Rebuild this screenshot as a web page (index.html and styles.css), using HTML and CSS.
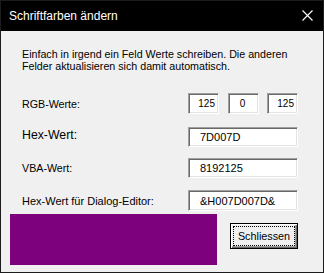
FILE: index.html
```html
<!DOCTYPE html>
<html lang="de">

<head>
    <meta charset="UTF-8">
    <title>Schriftfarben ändern</title>
    <link rel="stylesheet" href="styles.css">
</head>

<body>
    <div class="dialog">
        <div class="titlebar">
            <span class="title">Schriftfarben ändern</span>
            <svg class="close_icon" width="11" height="11" viewBox="0 0 11 11">
                <path d="M0.5 0.5 L10.5 10.5 M10.5 0.5 L0.5 10.5" stroke="#fff" stroke-width="1.1" fill="none" />
            </svg>
        </div>

        <div class="content">
            <p class="intro">Einfach in irgend ein Feld Werte schreiben. Die anderen<br>Felder aktualisieren sich damit automatisch.</p>

            <div class="row row_rgb">
                <label class="label">RGB-Werte:</label>
                <div class="rgb_fields">
                    <input class="field small right" type="text" value="125">
                    <input class="field small center" type="text" value="0">
                    <input class="field small right" type="text" value="125">
                </div>
            </div>

            <div class="row row_hex">
                <label class="label label_big">Hex-Wert:</label>
                <input class="field wide" type="text" value="7D007D">
            </div>

            <div class="row row_vba">
                <label class="label">VBA-Wert:</label>
                <input class="field wide" type="text" value="8192125">
            </div>

            <div class="row row_dialog">
                <label class="label label_mid">Hex-Wert für Dialog-Editor:</label>
                <input class="field wide" type="text" value="&amp;H007D007D&amp;">
            </div>

            <div class="bottom">
                <div class="swatch"></div>
                <button class="button" type="button">Schliessen</button>
            </div>
        </div>
    </div>
</body>

</html>
```

FILE: styles.css
```css
body {
    margin: 0;
    font-family: "Liberation Sans", Arial, sans-serif;
}

.dialog {
    width: 324px;
    height: 273px;
    box-sizing: border-box;
    border: 1px solid #1c1c1c;
    background-color: #f0f0f0;
    display: flex;
    flex-direction: column;
}

.titlebar {
    height: 30px;
    flex: none;
    background-color: #000;
    display: flex;
    align-items: center;
    padding-left: 8px;
}

.title {
    flex: 1;
    color: #fff;
    font-size: 12px;
}

.close_icon {
    margin-right: 10px;
    margin-top: -1px;
}

.content {
    padding: 17px 25px 0 9px;
}

.intro {
    margin: 0 0 0 12px;
    font-size: 10.7px;
    line-height: 12px;
    color: #000;
}

.row {
    display: flex;
    align-items: center;
    padding-left: 12px;
}

.label {
    flex: 1;
    font-size: 10.7px;
    color: #000;
}

.label_big {
    font-size: 12.3px;
    padding-bottom: 4px;
}

.label_mid {
    font-size: 11px;
}

.row_rgb {
    margin-top: 21px;
    height: 21px;
}

.row_hex {
    margin-top: 13px;
    height: 20px;
}

.row_vba {
    margin-top: 11px;
    height: 20px;
}

.row_dialog {
    margin-top: 12px;
    height: 21px;
}

.rgb_fields {
    width: 110px;
    display: flex;
    justify-content: space-between;
}

.field {
    box-sizing: border-box;
    margin: 0;
    font-family: "Liberation Sans", Arial, sans-serif;
    font-size: 11px;
    color: #000;
    background-color: #fff;
    border: 1px solid;
    border-color: #a0a0a0 #ffffff #ffffff #a0a0a0;
    box-shadow: inset 1px 1px #696969, inset -1px -1px #e3e3e3;
    outline: none;
}

.small {
    width: 31px;
    height: 21px;
    font-size: 10px;
    padding: 0 3px 0 2px;
}

.right {
    text-align: right;
}

.center {
    text-align: center;
}

.wide {
    width: 110px;
    height: 100%;
    padding: 0 0 0 11px;
}

.bottom {
    margin-top: 3px;
    display: flex;
    align-items: flex-start;
}

.swatch {
    width: 207px;
    height: 51px;
    background-color: #7d007d;
}

.button {
    margin: 9px 0 0 13px;
    width: 68px;
    height: 26px;
    box-sizing: border-box;
    padding: 0;
    font-family: "Liberation Sans", Arial, sans-serif;
    font-size: 10.8px;
    color: #000;
    background-color: #f0f0f0;
    border: 1px solid #000;
    box-shadow: inset 1px 1px #fff, inset -1px -1px #696969, inset -2px -2px #a0a0a0;
    outline: 1px dotted #000;
    outline-offset: -4px;
}
```
